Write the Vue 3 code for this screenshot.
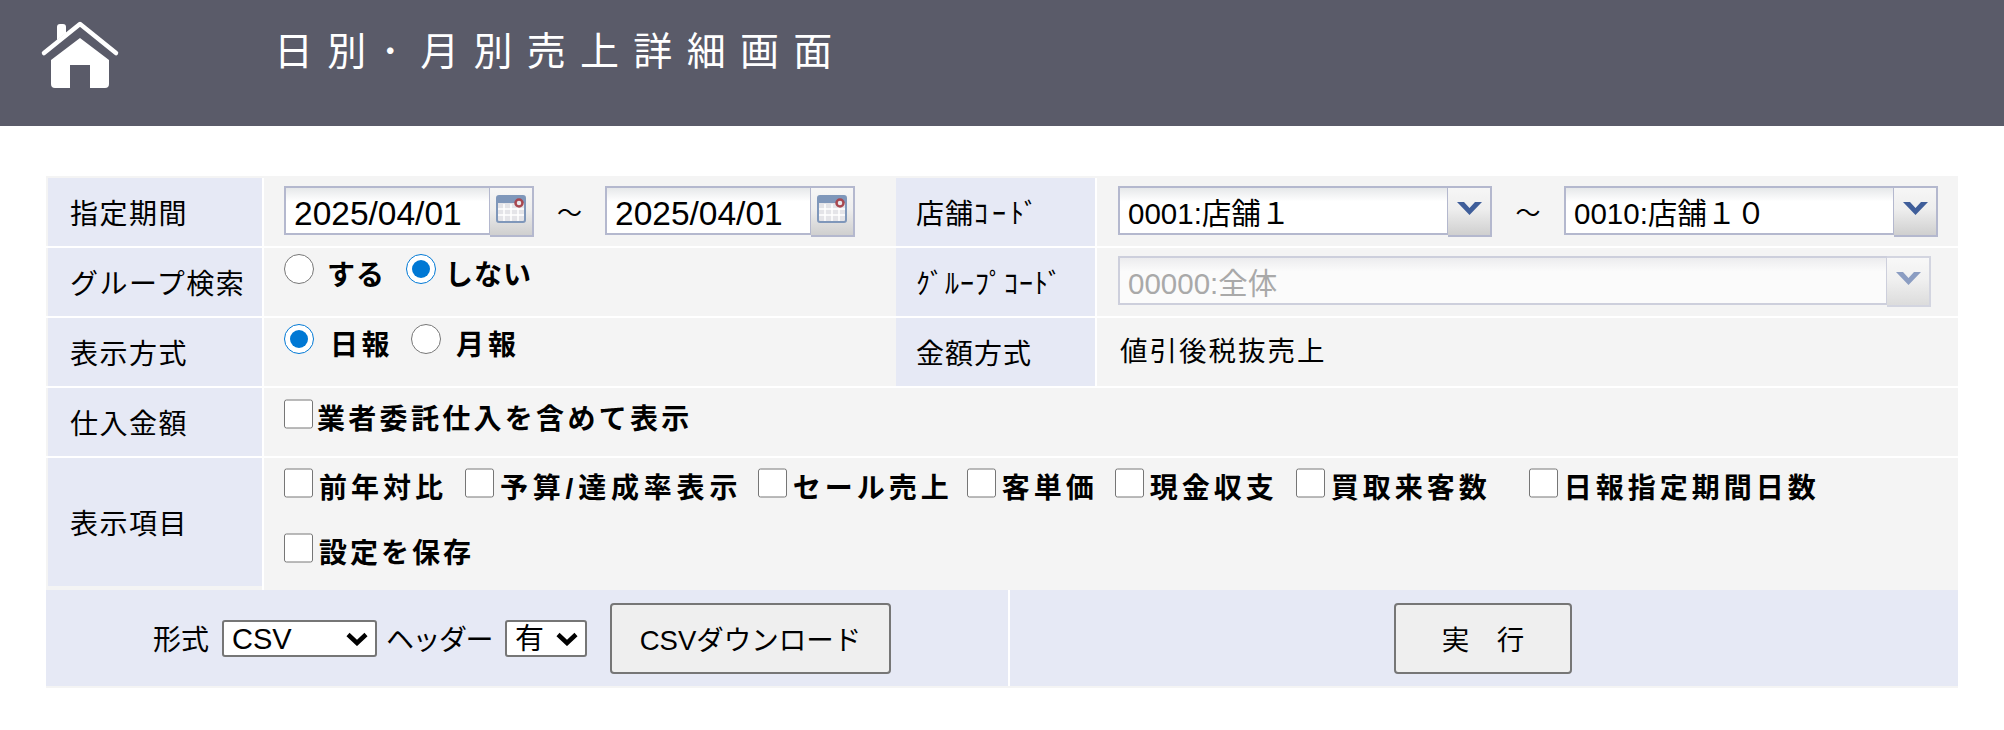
<script setup>
const items = [
  { text: '前年対比', gap: 18, spacing: 4 },
  { text: '予算/達成率表示', gap: 15.5, spacing: 4.8 },
  { text: 'セール売上', gap: 14, spacing: 4 },
  { text: '客単価', gap: 17, spacing: 4 },
  { text: '現金収支', gap: 18, spacing: 4 },
  { text: '買取来客数', gap: 38, spacing: 4 },
  { text: '日報指定期間日数', gap: 0, spacing: 4 },
]
</script>

<template>
  <header class="top">
    <svg class="home" viewBox="0 0 100 90" aria-hidden="true">
      <path d="M14 43 50 14 86 43" fill="none" stroke="#fff" stroke-width="4.500" stroke-linecap="round" stroke-linejoin="round" />
      <path d="M27 30V17q0-3 3-3h3q3 0 3 3v6z" fill="#fff" />
      <path d="M50 28 79 50V74q0 4-4 4H60V55H40V78H25q-4 0-4-4V50z" fill="#fff" />
    </svg>
    <h1 class="title">日別<span class="dot">･</span>月別売上詳細画面</h1>
  </header>

  <main class="panel">
    <div class="row">
      <div class="label">指定期間</div>
      <div class="value wide-top">
        <div class="combo">
          <div class="field date">2025/04/01</div>
          <div class="side">
            <svg class="cal" viewBox="0 0 30 28" aria-hidden="true">
              <rect x="1" y="1" width="28" height="26" rx="2" fill="#e4e4e8" stroke="#7f97ba" stroke-width="2" />
              <rect x="2" y="2" width="26" height="6" fill="#7f97ba" />
              <path d="M8 9v17M15 9v17M22 9v17M2 14h26M2 20h26" stroke="#fff" stroke-width="1.500" />
              <circle cx="23" cy="8" r="3.500" fill="#e8e8ec" stroke="#a8474f" stroke-width="2.500" />
            </svg>
          </div>
        </div>
        <span class="tilde">～</span>
        <div class="combo">
          <div class="field date">2025/04/01</div>
          <div class="side">
            <svg class="cal" viewBox="0 0 30 28" aria-hidden="true">
              <rect x="1" y="1" width="28" height="26" rx="2" fill="#e4e4e8" stroke="#7f97ba" stroke-width="2" />
              <rect x="2" y="2" width="26" height="6" fill="#7f97ba" />
              <path d="M8 9v17M15 9v17M22 9v17M2 14h26M2 20h26" stroke="#fff" stroke-width="1.500" />
              <circle cx="23" cy="8" r="3.500" fill="#e8e8ec" stroke="#a8474f" stroke-width="2.500" />
            </svg>
          </div>
        </div>
      </div>
      <div class="label label-right">店舗<span class="kana">ｺｰﾄﾞ</span></div>
      <div class="value wide-top">
        <div class="combo">
          <div class="field store">0001:店舗１</div>
          <div class="side">
            <svg class="chev" viewBox="0 0 25 13" aria-hidden="true"><path d="M0 0h7l5.500 6L18 0h7L12.500 13z" fill="#3f5e9a" /></svg>
          </div>
        </div>
        <span class="tilde tilde-store">～</span>
        <div class="combo">
          <div class="field store">0010:店舗１０</div>
          <div class="side">
            <svg class="chev" viewBox="0 0 25 13" aria-hidden="true"><path d="M0 0h7l5.500 6L18 0h7L12.500 13z" fill="#3f5e9a" /></svg>
          </div>
        </div>
      </div>
    </div>

    <div class="row">
      <div class="label">グループ検索</div>
      <div class="value options">
        <input class="radio" type="radio" name="group" />
        <label class="opt opt-a">する</label>
        <input class="radio" type="radio" name="group" checked />
        <label class="opt opt-c">しない</label>
      </div>
      <div class="label label-right">ｸﾞﾙｰﾌﾟｺｰﾄﾞ</div>
      <div class="value wide-top">
        <div class="combo off">
          <div class="field group">00000:全体</div>
          <div class="side">
            <svg class="chev" viewBox="0 0 25 13" aria-hidden="true"><path d="M0 0h7l5.500 6L18 0h7L12.500 13z" fill="#8b9dc2" /></svg>
          </div>
        </div>
      </div>
    </div>

    <div class="row">
      <div class="label">表示方式</div>
      <div class="value options">
        <input class="radio" type="radio" name="mode" checked />
        <label class="opt opt-b">日報</label>
        <input class="radio" type="radio" name="mode" />
        <label class="opt opt-d">月報</label>
      </div>
      <div class="label label-right">金額方式</div>
      <div class="value plain">値引後税抜売上</div>
    </div>

    <div class="row">
      <div class="label">仕入金額</div>
      <div class="value span checks single">
        <label class="check"><input type="checkbox" />業者委託仕入を含めて表示</label>
      </div>
    </div>

    <div class="row row-tall">
      <div class="label">表示項目</div>
      <div class="value span lines">
        <div class="checks">
          <label
            v-for="item in items"
            :key="item.text"
            class="check"
            :style="{ marginRight: item.gap + 'px', letterSpacing: item.spacing + 'px' }"
          >
            <input type="checkbox" />{{ item.text }}
          </label>
        </div>
        <div class="checks tight">
          <label class="check"><input type="checkbox" />設定を保存</label>
        </div>
      </div>
    </div>

    <div class="foot">
      <div class="foot-left">
        <span>形式</span>
        <span class="sel-wrap wrap-format">
          <select class="sel"><option>CSV</option></select>
          <svg class="arrow" viewBox="0 0 22 14" aria-hidden="true"><path d="M2 2.500 11 11 20 2.500" fill="none" stroke="#000" stroke-width="4.500" /></svg>
        </span>
        <span class="head-label">ヘッダー</span>
        <span class="sel-wrap wrap-head">
          <select class="sel"><option>有</option></select>
          <svg class="arrow" viewBox="0 0 22 14" aria-hidden="true"><path d="M2 2.500 11 11 20 2.500" fill="none" stroke="#000" stroke-width="4.500" /></svg>
        </span>
        <button class="btn btn-csv" type="button">CSVダウンロード</button>
      </div>
      <div class="foot-right">
        <button class="btn btn-run" type="button">実　行</button>
      </div>
    </div>
  </main>
</template>

<style>
html, body { background: #fff; }
</style>

<style scoped>
* { box-sizing: border-box; }
.top {
  height: 126px;
  background: #5a5b69;
  display: flex;
  align-items: flex-start;
  font-family: "Liberation Sans", "Noto Sans CJK JP", sans-serif;
}
.home { width: 100px; height: 90px; margin: 10px 0 0 30px; flex: none; }
.title {
  margin: 25px 0 0 144px;
  font-size: 39px;
  line-height: 54px;
  font-weight: 400;
  letter-spacing: 14.300px;
  color: #fff;
  white-space: nowrap;
}
.dot { letter-spacing: 20px; }
.panel {
  width: 1912px;
  margin: 50px 0 0 46px;
  padding: 2px 0 2px;
  background: #f4f4f4;
  color: #000;
  font-family: "Liberation Sans", "Noto Sans CJK JP", sans-serif;
}
.row {
  display: grid;
  grid-template-columns: 216px 634px 199px 1fr;
  height: 70px;
  border-bottom: 2px solid #fff;
}
.row-tall { height: 132px; border-bottom: 0; }
.label {
  display: flex;
  align-items: center;
  padding-left: 22px;
  margin-left: 2px;
  background: #e6e9f5;
  font-size: 28px;
  letter-spacing: 1.500px;
  white-space: nowrap;
}
.row-tall .label { height: 128px; }
.label-right { margin-left: 0; padding-left: 20px; letter-spacing: 1px; }
.kana { letter-spacing: 4px; }
.value { border-left: 2px solid #fff; min-width: 0; }
.span { grid-column: 2 / 5; }
.wide-top { display: flex; padding: 8px 0 0 20px; align-items: flex-start; }
.value:last-child.wide-top { padding-left: 21px; }
.combo { display: flex; align-items: flex-start; }
.field {
  height: 49px;
  border: 2px solid #b4b8ce;
  background: linear-gradient(#e6e8ea, #fff 30%);
  display: flex;
  align-items: center;
  padding: 6px 0 0 8px;
  white-space: nowrap;
}
.date { width: 207px; font-size: 33.500px; }
.store { width: 331px; font-size: 29.500px; padding-top: 0; }
.group { width: 770px; font-size: 29.500px; padding-top: 1px; color: #a9a9a9; background: linear-gradient(#ececee, #fbfbfb 30%); border-color: #cdcfdc; }
.side {
  width: 44px;
  height: 51px;
  margin-left: -1px;
  border: 2px solid #b4b8ce;
  border-left: 0;
  background: linear-gradient(#f6f6f6, #eee 45%, #cfcfcf);
  display: flex;
  align-items: center;
  justify-content: center;
}
.off .side { border-color: #d3d5e0; background: linear-gradient(#f8f8f8, #f0f0f0 45%, #dcdcdc); }
.cal { width: 30px; height: 28px; margin-top: -6px; }
.chev { width: 25px; height: 13px; margin-top: -6px; }
.tilde {
  width: 71px;
  height: 49px;
  display: flex;
  align-items: center;
  justify-content: center;
  font-size: 25px;
}
.tilde-store { width: 72px; }
.options { display: flex; align-items: flex-start; padding: 6px 0 0 20px; }
.radio { width: 30px; height: 30px; margin: 0; flex: none; accent-color: #0078d4; }
.opt { font-size: 28px; font-weight: 700; letter-spacing: 1px; line-height: 38px; margin-top: 3px; }
.opt-a { width: 79px; margin-left: 13px; }
.opt-b { width: 81px; margin-left: 16px; letter-spacing: 3.500px; }
.opt-c { margin-left: 9px; }
.opt-d { margin-left: 15px; letter-spacing: 4px; }
.plain { display: flex; align-items: flex-start; padding: 12px 0 0 23px; font-size: 27.500px; letter-spacing: 2px; line-height: 44px; }
.checks { display: flex; align-items: flex-start; padding: 9px 0 0 20px; white-space: nowrap; }
.lines { display: flex; flex-direction: column; gap: 12px; }
.check { display: flex; align-items: flex-start; font-size: 28px; font-weight: 700; letter-spacing: 4px; line-height: 44px; }
.check input { width: 29px; height: 30px; margin: 1px 6px 0 0; flex: none; }
.single { padding-top: 10px; }
.single .check { letter-spacing: 3.300px; }
.single .check input { margin-right: 4px; }
.tight .check { letter-spacing: 3px; }
.foot {
  display: grid;
  grid-template-columns: 962px 1fr;
  height: 96px;
  background: #e6e9f5;
  font-size: 28px;
}
.foot-left { display: flex; align-items: center; padding-left: 107px; white-space: nowrap; }
.foot-right { display: flex; align-items: center; justify-content: center; border-left: 2px solid #fff; }
.sel-wrap { position: relative; display: block; height: 37px; flex: none; }
.wrap-format { width: 155px; margin-left: 13px; }
.wrap-head { width: 82px; margin: 0 23px 0 13px; }
.head-label { margin-left: 9px; letter-spacing: -1.500px; }
.sel {
  appearance: none;
  width: 100%;
  height: 37px;
  padding: 1px 0 0 8px;
  font: 29px/33px "Liberation Sans", "Noto Sans CJK JP", sans-serif;
  background: #fff;
  border: 2px solid #767676;
  border-radius: 3px;
  color: #000;
  display: block;
}
.arrow { position: absolute; right: 9px; top: 12px; width: 22px; height: 14px; pointer-events: none; }
.btn {
  height: 71px;
  background: #efefef;
  border: 2px solid #767676;
  border-radius: 4px;
  font: 27.500px "Liberation Sans", "Noto Sans CJK JP", sans-serif;
  color: #000;
  padding: 0;
  flex: none;
}
.btn-csv { width: 281px; }
.btn-run { width: 178px; margin-left: -2px; }
</style>
